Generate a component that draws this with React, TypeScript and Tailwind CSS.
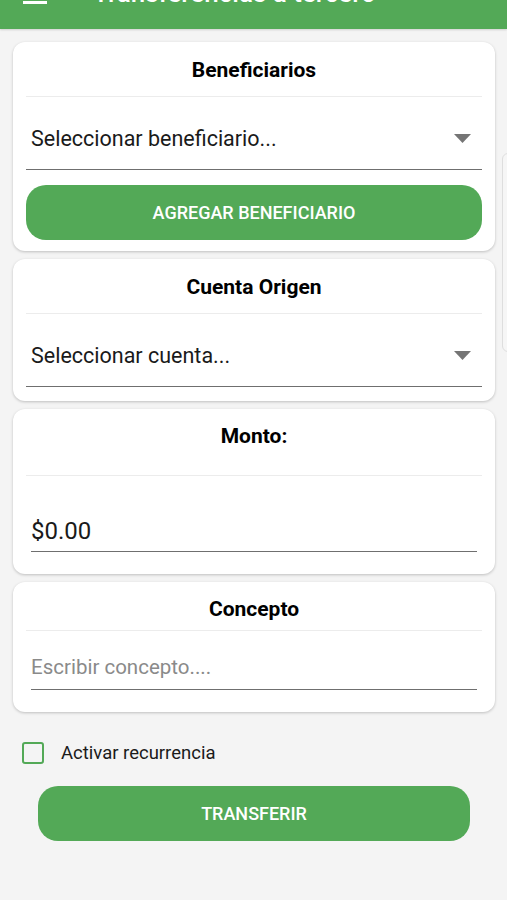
import React from "react";

function Caret() {
  return (
    <svg width="17" height="9" viewBox="0 0 17 9" className="shrink-0">
      <path d="M0 0 L17 0 L8.5 9 Z" fill="#757575" />
    </svg>
  );
}

function Card({ children }: { children: React.ReactNode }) {
  return (
    <div className="bg-white rounded-[12px] shadow-[0_1px_3px_rgba(0,0,0,0.22)] px-[13px]">
      {children}
    </div>
  );
}

export default function App() {
  return (
    <div
      className="relative w-[507px] h-[900px] bg-[#f4f4f4] overflow-hidden"
      style={{ fontFamily: "Roboto, 'Liberation Sans', sans-serif" }}
    >
      {/* header */}
      <div className="h-[29px] bg-[#53a957] overflow-hidden shadow-[0_1px_2px_rgba(0,0,0,0.15)]">
        <div className="h-full w-full relative">
          <div className="absolute left-[23px] top-[-13px] w-[24px] flex flex-col gap-[4px]">
            <div className="h-[3px] bg-white" />
            <div className="h-[3px] bg-white" />
            <div className="h-[3px] bg-white" />
          </div>
          <div className="absolute left-[93px] top-[-22px] text-white text-[26px] font-medium leading-[30px] whitespace-nowrap">
            Transferencias a tercero
          </div>
        </div>
      </div>

      {/* faint side element */}
      <div className="absolute left-[502px] top-[153px] w-[20px] h-[199px] rounded-[6px] border border-[#dedede] bg-[#f6f6f6]" />

      <div className="flex flex-col gap-[8px] pl-[13px] pr-[12px] pt-[13px] w-full">
        {/* Beneficiarios */}
        <Card>
          <div className="h-[55px] flex items-center justify-center border-b border-[#ececec]">
            <span className="text-[21px] font-bold text-black mt-[2px] leading-[26px]">Beneficiarios</span>
          </div>
          <div className="h-[73px] flex items-center justify-between border-b-[1.5px] border-[#6f6f6f] pl-[5px] pr-[11px]">
            <span className="text-[21.5px] text-[#1a1a1a] mt-[12px] leading-[28px]">Seleccionar beneficiario...</span>
            <span className="mt-[11px]"><Caret /></span>
          </div>
          <div className="pt-[15px] pb-[11px]">
            <div className="h-[55px] rounded-[20px] bg-[#53a957] flex items-center justify-center text-white text-[18px] font-medium">
              AGREGAR BENEFICIARIO
            </div>
          </div>
        </Card>

        {/* Cuenta Origen */}
        <Card>
          <div className="h-[55px] flex items-center justify-center border-b border-[#ececec]">
            <span className="text-[21px] font-bold text-black mt-[2px] leading-[26px]">Cuenta Origen</span>
          </div>
          <div className="h-[73px] flex items-center justify-between border-b-[1.5px] border-[#6f6f6f] pl-[5px] pr-[11px]">
            <span className="text-[21.5px] text-[#1a1a1a] mt-[12px] leading-[28px]">Seleccionar cuenta...</span>
            <span className="mt-[11px]"><Caret /></span>
          </div>
          <div className="h-[14px]" />
        </Card>

        {/* Monto */}
        <Card>
          <div className="h-[67px] flex items-start justify-center pt-[14px] border-b border-[#ececec]">
            <span className="text-[21px] font-bold text-black leading-[26px]">Monto:</span>
          </div>
          <div className="px-[5px]">
            <div className="h-[76px] flex items-end pb-[5px] border-b-[1.5px] border-[#6f6f6f]">
              <span className="text-[24px] text-[#1a1a1a] leading-[30px]">$0.00</span>
            </div>
          </div>
          <div className="h-[22px]" />
        </Card>

        {/* Concepto */}
        <Card>
          <div className="h-[49px] flex items-center justify-center border-b border-[#ececec]">
            <span className="text-[21px] font-bold text-black mt-[5px] leading-[26px]">Concepto</span>
          </div>
          <div className="px-[5px]">
            <div className="h-[59px] flex items-end pb-[9px] border-b-[1.5px] border-[#6f6f6f]">
              <span className="text-[20.5px] text-[#8a8a8a] leading-[26px]">Escribir concepto....</span>
            </div>
          </div>
          <div className="h-[22px]" />
        </Card>
      </div>

      {/* checkbox */}
      <div className="flex items-center mt-[29px] pl-[22px]">
        <div className="w-[22px] h-[22px] border-[2.5px] border-[#53a957] rounded-[3px]" />
        <span className="ml-[17px] text-[18.5px] text-[#1a1a1a] leading-[24px]">Activar recurrencia</span>
      </div>

      <div className="px-[38px] mt-[21px] w-[508px]">
        <div className="h-[55px] rounded-[20px] bg-[#53a957] flex items-center justify-center text-white text-[18px] font-medium">
          TRANSFERIR
        </div>
      </div>
    </div>
  );
}
